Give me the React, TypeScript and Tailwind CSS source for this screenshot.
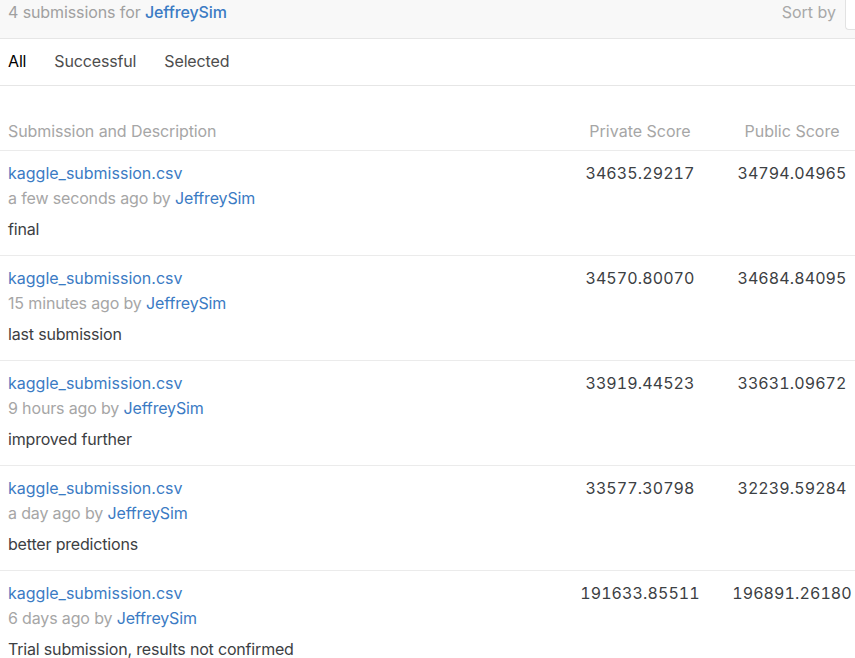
import React from "react";

type Submission = {
  file: string;
  when: string;
  by: string;
  description: string;
  privateScore: string;
  publicScore: string;
};

const submissions: Submission[] = [
  { file: "kaggle_submission.csv", when: "a few seconds ago", by: "JeffreySim", description: "final", privateScore: "34635.29217", publicScore: "34794.04965" },
  { file: "kaggle_submission.csv", when: "15 minutes ago", by: "JeffreySim", description: "last submission", privateScore: "34570.80070", publicScore: "34684.84095" },
  { file: "kaggle_submission.csv", when: "9 hours ago", by: "JeffreySim", description: "improved further", privateScore: "33919.44523", publicScore: "33631.09672" },
  { file: "kaggle_submission.csv", when: "a day ago", by: "JeffreySim", description: "better predictions", privateScore: "33577.30798", publicScore: "32239.59284" },
  { file: "kaggle_submission.csv", when: "6 days ago", by: "JeffreySim", description: "Trial submission, results not confirmed", privateScore: "191633.85511", publicScore: "196891.26180" },
];

const tabs = ["All", "Successful", "Selected"];

export default function App() {
  return (
    <div className="w-[855px] h-[658px] overflow-hidden bg-white font-['Inter',sans-serif] text-[16px] text-[#3c4043]">
      {/* top bar */}
      <div className="flex h-[39px] items-start justify-between border-b border-[#e6e6e6] bg-[#f8f8f8] pl-2">
        <div className="leading-6 tracking-[-0.1px] text-[#a0a0a0]">
          4 submissions for <span className="font-medium text-[#3b7bc4]">JeffreySim</span>
        </div>
        <div className="flex items-start">
          <span className="leading-6 text-[#a8a8a8]">Sort by</span>
          <div className="ml-[9px] h-[30px] w-[10px] rounded-bl-[4px] border-b border-l border-[#e2e2e2] bg-white" />
        </div>
      </div>

      {/* tabs */}
      <div className="flex h-[47px] items-center gap-[28px] border-b border-[#e6e6e6] px-2 pb-[2px] tracking-[-0.15px]">
        {tabs.map((t, i) => (
          <span key={t} className={i === 0 ? "text-black" : "text-[#4d4d4d]"}>
            {t}
          </span>
        ))}
      </div>

      <div className="w-[868px] pt-[26px]">
        {/* header */}
        <div className="grid h-[39px] grid-cols-[1fr_152px_152px] items-center border-b border-[#ebebeb] text-[#a6a6a6]">
          <span className="pl-2 tracking-[-0.1px]">Submission and Description</span>
          <span className="text-center">Private Score</span>
          <span className="text-center">Public Score</span>
        </div>

        {submissions.map((s, i) => (
          <div
            key={i}
            className="grid h-[105px] grid-cols-[1fr_152px_152px] border-b border-[#ebebeb] pt-[10px] leading-6"
          >
            <div className="pl-2">
              <div className="text-[#3b7bc4]">{s.file}</div>
              <div className="mt-[1px] tracking-[-0.15px] text-[#a6a6a6]">
                {s.when} by <span className="text-[#3b7bc4]">{s.by}</span>
              </div>
              <div className="mt-[7px] tracking-[-0.18px]">{s.description}</div>
            </div>
            <div className="text-center tabular-nums tracking-[0.1px]">{s.privateScore}</div>
            <div className="text-center tabular-nums tracking-[0.1px]">{s.publicScore}</div>
          </div>
        ))}
      </div>
    </div>
  );
}
